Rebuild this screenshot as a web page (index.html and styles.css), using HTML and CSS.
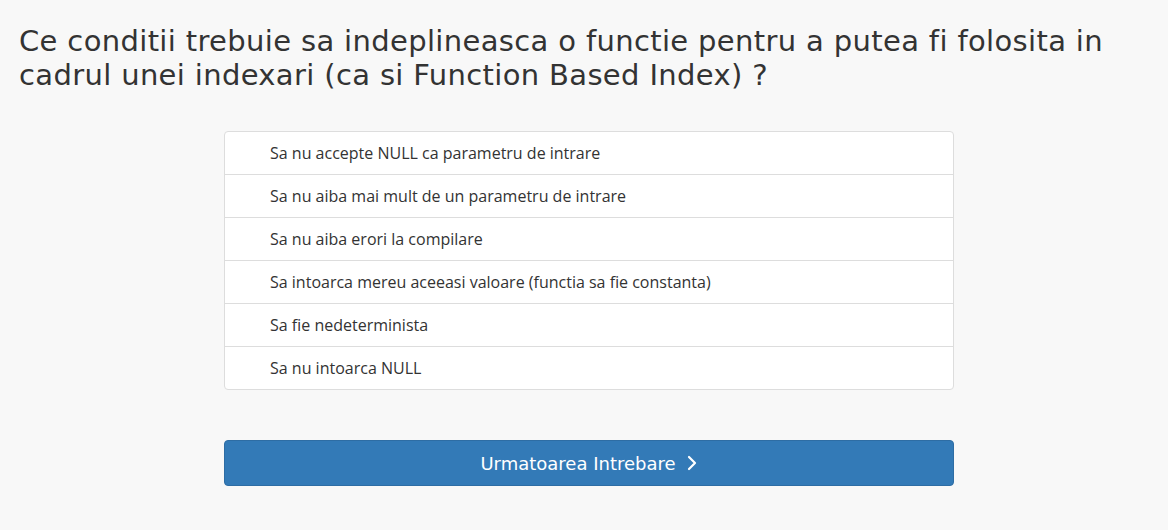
FILE: index.html
```html
<!DOCTYPE html>
<html>
<head>
<meta charset="utf-8">
<link rel="stylesheet" href="styles.css">
</head>
<body>
<div class="page">
  <h1 class="question">Ce conditii trebuie sa indeplineasca o functie pentru a putea fi folosita in cadrul unei indexari (ca si Function Based Index) ?</h1>
  <div class="answers">
    <ul class="list-group">
      <li class="list-item">Sa nu accepte NULL ca parametru de intrare</li>
      <li class="list-item">Sa nu aiba mai mult de un parametru de intrare</li>
      <li class="list-item">Sa nu aiba erori la compilare</li>
      <li class="list-item">Sa intoarca mereu aceeasi valoare (functia sa fie constanta)</li>
      <li class="list-item">Sa fie nedeterminista</li>
      <li class="list-item">Sa nu intoarca NULL</li>
    </ul>
    <button class="next-btn">Urmatoarea Intrebare <svg class="chev" width="12" height="16" viewBox="0 0 12 16"><path d="M3 2 L9 8 L3 14" fill="none" stroke="#fff" stroke-width="2.2" stroke-linecap="round" stroke-linejoin="round"/></svg></button>
  </div>
</div>
</body>
</html>
```
FILE: styles.css
```css
html, body {
  margin: 0;
  padding: 0;
  background: #f8f8f8;
}
.page {
  padding: 24px 0 0 19px;
}
.question {
  margin: 0;
  font-family: "DejaVu Sans", sans-serif;
  font-weight: normal;
  font-size: 29px;
  letter-spacing: 0.35px;
  line-height: 34px;
  color: #333;
  max-width: 1125px;
}
.answers {
  margin: 39px 0 0 205px;
  width: 730px;
}
.list-group {
  list-style: none;
  margin: 0;
  padding: 0;
  background: #fff;
  border: 1px solid #ddd;
  border-radius: 4px;
}
.list-item {
  font-family: "Open Sans", sans-serif;
  font-size: 16px;
  color: #333;
  height: 42px;
  line-height: 42px;
  padding-left: 45px;
  border-top: 1px solid #ddd;
}
.list-item:first-child {
  border-top: none;
}
.next-btn {
  display: flex;
  align-items: center;
  justify-content: center;
  gap: 10px;
  margin-top: 50px;
  width: 730px;
  height: 46px;
  background: #337ab7;
  border: 1px solid #2e6da4;
  border-radius: 4px;
  color: #fff;
  font-family: "DejaVu Sans", sans-serif;
  font-size: 18px;
  font-weight: 500;
  padding: 0;
}
.chev {
  display: block;
}
```
